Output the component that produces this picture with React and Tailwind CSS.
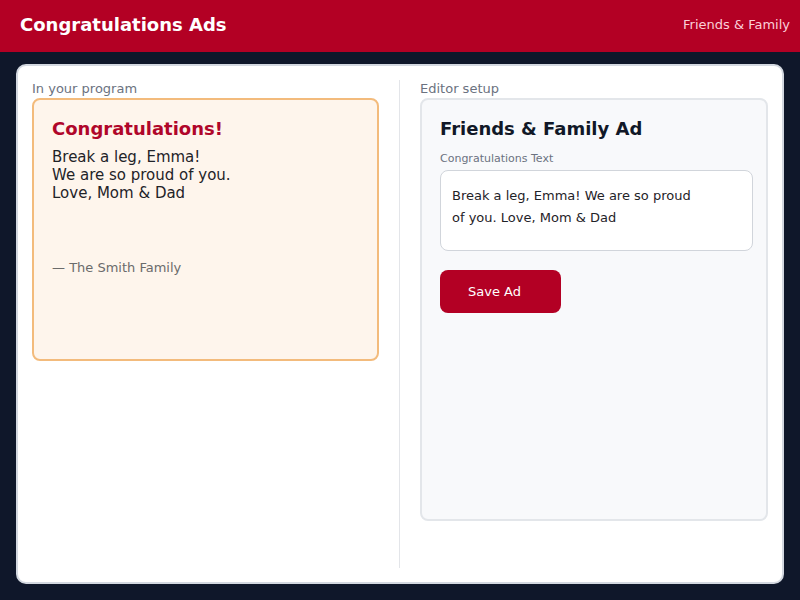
export default function App() {
  return (
    <div className="min-h-screen bg-[#0f172a] font-['DejaVu_Sans',sans-serif]">
      <header className="h-[52px] bg-[#b30024] flex items-center justify-between pl-5 pr-[10px] pb-[3px]">
        <h1 className="text-[18px] font-bold text-white">Congratulations Ads</h1>
        <span className="text-[13px] text-[#fbcfd8]">Friends &amp; Family</span>
      </header>

      <div className="px-4 pt-3 pb-4">
        <div className="h-[520px] bg-white rounded-[10px] border-2 border-[#d3d8e0] p-[14px] grid grid-cols-[347px_1px_minmax(0,1fr)] gap-x-5">
          {/* preview column */}
          <section className="flex flex-col">
            <p className="text-[13px] leading-[18px] text-[#6b7280]">In your program</p>
            <div className="h-[263px] bg-[#fef5ec] border-2 border-[#f3bb7c] rounded-lg px-[18px] pt-[17px]">
              <h2 className="text-[18px] leading-[24px] font-bold text-[#b0062a]">Congratulations!</h2>
              <div className="mt-[7px] text-[15px] leading-[18px] text-[#1f2328]">
                <p>Break a leg, Emma!</p>
                <p>We are so proud of you.</p>
                <p>Love, Mom &amp; Dad</p>
              </div>
              <p className="mt-[57px] text-[13px] leading-[18px] text-[#6b6b6b]">— The Smith Family</p>
            </div>
          </section>

          <div className="bg-[#e3e5e9]" />

          {/* editor column */}
          <section className="flex flex-col">
            <p className="text-[13px] leading-[18px] text-[#6b7280]">Editor setup</p>
            <div className="h-[423px] bg-[#f8f9fb] border-2 border-[#e3e6ea] rounded-lg pl-[18px] pr-3 pt-[17px]">
              <h2 className="text-[18px] leading-[24px] font-bold text-[#111827]">Friends &amp; Family Ad</h2>
              <label className="block mt-[11px] text-[11px] leading-[14px] text-[#6b7280]">Congratulations Text</label>
              <div className="mt-[4px] w-[313px] h-[81px] bg-white border border-[#d1d5db] rounded-lg pl-[11px] pt-[14px] text-[13px] leading-[22px] text-[#1f2328]">
                Break a leg, Emma! We are so proud<br />of you. Love, Mom &amp; Dad
              </div>
              <button className="mt-[19px] h-[43px] w-[121px] rounded-lg bg-[#b30024] px-7 text-left text-[13px] text-white">
                Save Ad
              </button>
            </div>
          </section>
        </div>
      </div>
    </div>
  );
}
